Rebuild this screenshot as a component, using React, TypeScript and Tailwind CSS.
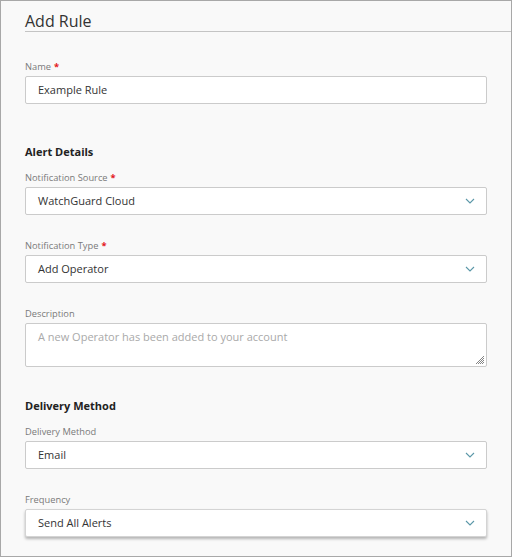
import React from 'react';

const font = { fontFamily: '"Open Sans", "Noto Sans", sans-serif' };

function Chevron() {
  return (
    <svg width="10" height="6" viewBox="0 0 10 6" className="shrink-0">
      <path d="M1 1 L5 5 L9 1" fill="none" stroke="#5b97a8" strokeWidth="1.1" />
    </svg>
  );
}

function Label({ text, required }: { text: string; required?: boolean }) {
  return (
    <div className="text-[9.3px] leading-[14px] text-[#7a7a7a]">
      {text}
      {required && <span className="ml-[3px] text-[#e3161b] font-bold">*</span>}
    </div>
  );
}

function TextField({ value }: { value: string }) {
  return (
    <div className="mt-[2px] h-[28px] flex items-center pl-3 bg-white border border-[#cbcbcb] rounded-[2px] text-[11px] text-[#333]">
      {value}
    </div>
  );
}

function SelectField({ value, focused }: { value: string; focused?: boolean }) {
  return (
    <div
      className={
        focused
          ? 'mt-[2px] h-[28px] flex items-center justify-between pl-3 pr-[11px] bg-white border border-[#d4d4d4] rounded-[2px] text-[11px] text-[#333] shadow-[0_2px_3px_rgba(0,0,0,0.28)]'
          : 'mt-[2px] h-[28px] flex items-center justify-between pl-3 pr-[11px] bg-white border border-[#cbcbcb] rounded-[2px] text-[11px] text-[#333]'
      }
    >
      <span>{value}</span>
      <Chevron />
    </div>
  );
}

export default function App() {
  return (
    <div style={font} className="w-[512px] h-[557px] border border-[#a8a8a8] bg-[#f9f9f9] overflow-hidden">
      <div className="ml-6 pt-[10px] border-b border-[#c4c4c4]">
        <h1 className="text-[16px] leading-[20px] text-[#333] font-normal">Add Rule</h1>
      </div>

      <div className="px-6">
        <div className="mt-[28px]">
          <Label text="Name" required />
          <TextField value="Example Rule" />
        </div>

        <h2 className="mt-[40px] text-[11px] leading-[16px] font-bold text-[#222]">Alert Details</h2>

        <div className="mt-[11px]">
          <Label text="Notification Source" required />
          <SelectField value="WatchGuard Cloud" />
        </div>

        <div className="mt-[24px]">
          <Label text="Notification Type" required />
          <SelectField value="Add Operator" />
        </div>

        <div className="mt-[24px]">
          <Label text="Description" />
          <div className="relative mt-[2px] h-[44px] pl-3 pt-[5px] bg-white border border-[#cbcbcb] rounded-[2px] text-[11px] text-[#a9a9a9]">
            A new Operator has been added to your account
            <svg width="10" height="10" viewBox="0 0 10 10" className="absolute right-[1px] bottom-[1px]">
              <path d="M9 1 L1 9 M9 3 L3 9 M9 5 L5 9 M9 7 L7 9" stroke="#666" strokeWidth="0.8" />
            </svg>
          </div>
        </div>

        <h2 className="mt-[31px] text-[11px] leading-[16px] font-bold text-[#222]">Delivery Method</h2>

        <div className="mt-[11px]">
          <Label text="Delivery Method" />
          <SelectField value="Email" />
        </div>

        <div className="mt-[24px]">
          <Label text="Frequency" />
          <SelectField value="Send All Alerts" focused />
        </div>
      </div>
    </div>
  );
}
